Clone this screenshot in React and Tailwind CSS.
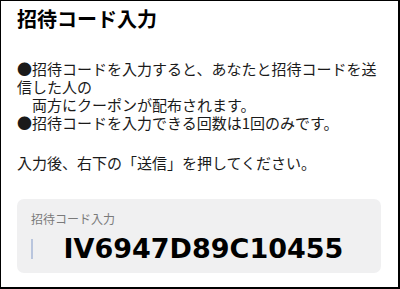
import React from 'react';

const jp = { fontFamily: '"Noto Sans CJK JP", "Noto Sans", sans-serif' };

const InviteCodeInput = () => {
  const code = 'IV6947D89C10455';

  return (
    <div
      className="w-[400px] h-[289px] box-border bg-white border-l border-t border-r-2 border-b-2 border-black text-[#1a1a1a] overflow-hidden"
      style={jp}
    >
      <div className="pl-[16px] pr-[17px] pt-[4px]">
        <h1 className="text-[20px] leading-[28px] font-bold text-black">招待コード入力</h1>

        <div className="mt-[27px] text-[15px] leading-[18px] whitespace-nowrap">
          <div>●招待コードを入力すると、あなたと招待コードを送</div>
          <div>信した人の</div>
          <div>　両方にクーポンが配布されます。</div>
          <div>●招待コードを入力できる回数は1回のみです。</div>
          <div className="mt-[22px]">入力後、右下の「送信」を押してください。</div>
        </div>

        <div className="mt-[27px] h-[74px] rounded-[7px] bg-[#f0f0f1] pl-[14px] pt-[12px]">
          <div className="text-[12px] leading-[16px] text-[#7a7a7a]">招待コード入力</div>
          <div className="mt-[6px] h-[32px] flex items-center">
            <span className="w-[1.5px] h-[20px] bg-[#b9c5dd]"></span>
            <span
              className="ml-[31px] text-[27px] leading-[32px] font-bold text-black"
              style={{ fontFamily: '"DejaVu Sans", Verdana, sans-serif' }}
            >
              {code}
            </span>
          </div>
        </div>
      </div>
    </div>
  );
};

export default InviteCodeInput;
